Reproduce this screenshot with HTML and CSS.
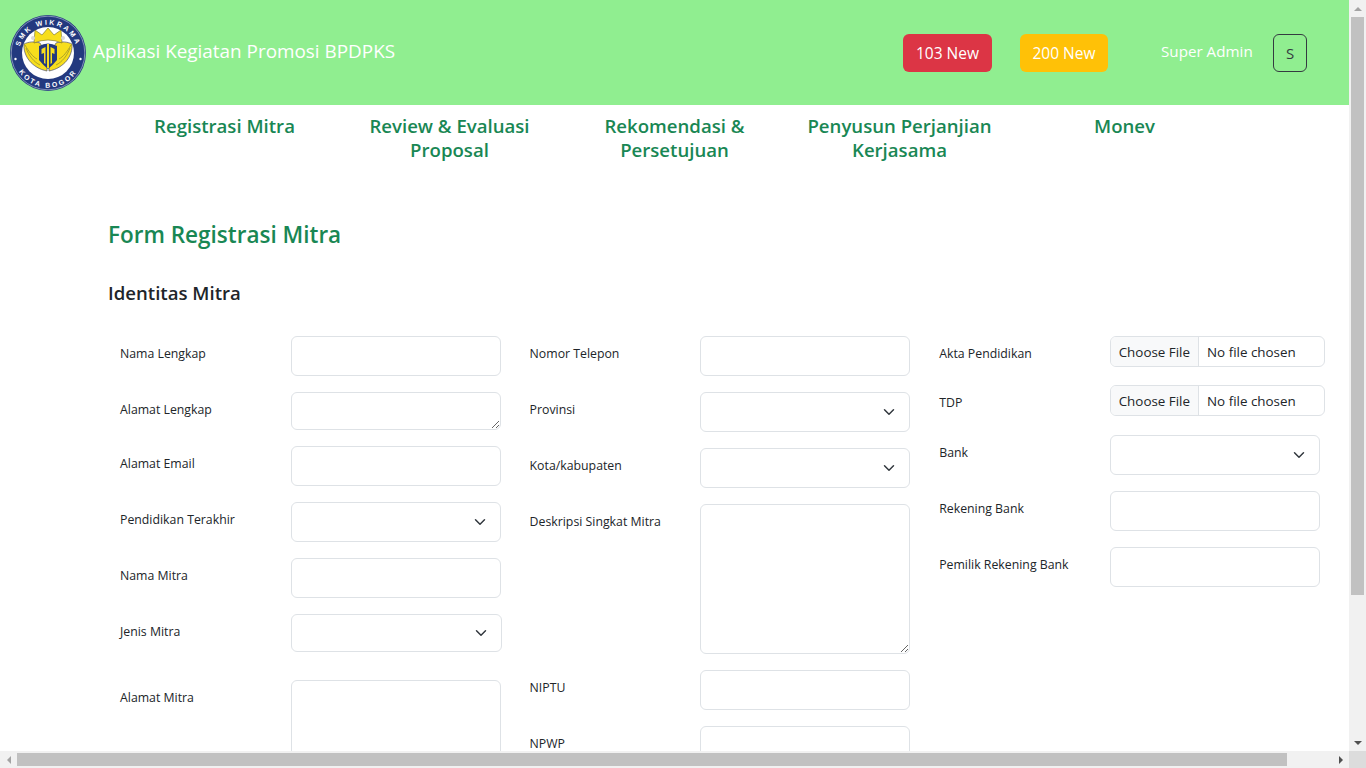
FILE: index.html
```html
<!DOCTYPE html>
<html>
<head>
	<title>Aplikasi Kegiatan Promosi BPDPKS</title>

	<link rel="stylesheet" href="styles.css">

</head>
<body>

<div class="window">
	<div class="viewport">

		<header class="topbar">
			<svg class="logo" viewBox="0 0 76 76">
				<defs>
					<path id="arcTop" d="M 9.5 44 A 29 29 0 1 1 66.5 44"/>
					<path id="arcBottom" d="M 3.8 42 A 34.4 34.4 0 0 0 72.2 42"/>
				</defs>
				<circle cx="38" cy="38" r="38" fill="#23397f"/>
				<circle cx="38" cy="38" r="36.8" fill="none" stroke="#dfe4f0" stroke-width="0.5"/>
				<circle cx="38" cy="38" r="26" fill="#fff"/>
				<text class="logo-text"><textPath href="#arcTop" startOffset="50%" text-anchor="middle">SMK WIKRAMA</textPath></text>
				<text class="logo-text"><textPath href="#arcBottom" startOffset="50%" text-anchor="middle">KOTA BOGOR</textPath></text>
				<circle cx="5.5" cy="44" r="1.2" fill="#fff"/>
				<circle cx="70.5" cy="44" r="1.2" fill="#fff"/>
				<path d="M30 28 C24 26 18 27 14 29 C13 41 22 53 37 56 L37 40 Z" fill="#f7de1c" stroke="#4d5170" stroke-width="0.7"/>
				<path d="M46 28 C52 26 58 27 62 29 C63 41 54 53 39 56 L39 40 Z" fill="#f7de1c" stroke="#4d5170" stroke-width="0.7"/>
				<path d="M16 33 C19 41 24 47 30 50 M15 30 C19 37 23 42 27 44 M49 44 C53 42 57 37 61 30 M46 50 C52 47 57 41 60 33" fill="none" stroke="#8d8a30" stroke-width="0.7"/>
				<path d="M24 28 L25 15 L32 20 L38 13 L44 20 L51 15 L52 28 Q38 22 24 28 Z" fill="#f7de1c" stroke="#6f6c2c" stroke-width="0.6"/>
				<circle cx="23" cy="23" r="2" fill="#d8d8d8"/>
				<circle cx="53" cy="23" r="2" fill="#d8d8d8"/>
				<path d="M29 31 Q38 26 47 31 L47 45 Q43 50 38 54 Q33 50 29 45 Z" fill="#23397f"/>
				<path d="M31.5 34 L35.5 32 L35.5 49 L34 48 L34 38 L31.5 39 Z M44.5 34 L40.5 32 L40.5 49 L42 48 L42 38 L44.5 39 Z" fill="#f7de1c"/>
				<path d="M37 29 L39 29 L39 53 L37 53 Z" fill="#f7de1c"/>
			</svg>
			<span class="brand">Aplikasi Kegiatan Promosi BPDPKS</span>
			<div class="topbar-right">
				<button class="badge badge-red">103 New</button>
				<button class="badge badge-yellow">200 New</button>
				<span class="username">Super Admin</span>
				<button class="avatar">S</button>
			</div>
		</header>

		<nav class="menu">
			<a class="menu-item">Registrasi Mitra</a>
			<a class="menu-item">Review &amp; Evaluasi Proposal</a>
			<a class="menu-item">Rekomendasi &amp; Persetujuan</a>
			<a class="menu-item">Penyusun Perjanjian Kerjasama</a>
			<a class="menu-item">Monev</a>
		</nav>

		<main class="content">
			<h2 class="title">Form Registrasi Mitra</h2>
			<h3 class="subtitle">Identitas Mitra</h3>

			<form class="columns">
				<div class="col">
					<div class="row"><label>Nama Lengkap</label><input type="text"></div>
					<div class="row"><label>Alamat Lengkap</label><textarea class="short"></textarea></div>
					<div class="row row-tight"><label>Alamat Email</label><input type="text"></div>
					<div class="row"><label>Pendidikan Terakhir</label><select></select></div>
					<div class="row"><label>Nama Mitra</label><input type="text"></div>
					<div class="row row-gap"><label>Jenis Mitra</label><select class="select-small"></select></div>
					<div class="row"><label>Alamat Mitra</label><textarea class="tall"></textarea></div>
				</div>
				<div class="col">
					<div class="row"><label>Nomor Telepon</label><input type="text"></div>
					<div class="row"><label>Provinsi</label><select></select></div>
					<div class="row"><label>Kota/kabupaten</label><select></select></div>
					<div class="row"><label>Deskripsi Singkat Mitra</label><textarea class="tall"></textarea></div>
					<div class="row"><label>NIPTU</label><input type="text"></div>
					<div class="row"><label>NPWP</label><input type="text"></div>
				</div>
				<div class="col">
					<div class="row row-file"><label>Akta Pendidikan</label><input type="file"></div>
					<div class="row row-file"><label>TDP</label><input type="file"></div>
					<div class="row"><label>Bank</label><select></select></div>
					<div class="row"><label>Rekening Bank</label><input type="text"></div>
					<div class="row"><label>Pemilik Rekening Bank</label><input type="text"></div>
				</div>
			</form>
		</main>

	</div>

	<div class="scroll-v">
		<span class="arrow arrow-up"></span>
		<span class="thumb-v"></span>
		<span class="arrow arrow-down"></span>
	</div>
	<div class="scroll-h">
		<span class="arrow arrow-left"></span>
		<span class="thumb-h"></span>
		<span class="arrow arrow-right"></span>
	</div>
	<div class="scroll-corner"></div>
</div>

</body>
</html>
```

FILE: styles.css
```css
* {
	box-sizing: border-box;
}

html, body {
	margin: 0;
	height: 100%;
	overflow: hidden;
}

body {
	background: #fff;
	color: #212529;
	font-family: "Open Sans", "Noto Sans", sans-serif;
	font-size: 16px;
}

.window {
	display: grid;
	grid-template-columns: 1349px 17px;
	grid-template-rows: 751px 17px;
	height: 768px;
}

.viewport {
	overflow: hidden;
}

/* header */
.topbar {
	display: flex;
	align-items: center;
	height: 105px;
	padding: 1px 42px 0 10px;
	background: #90ee90;
}

.logo {
	width: 76px;
	height: 76px;
	flex: none;
}

.logo-text {
	fill: #fff;
	font-family: "Liberation Sans", sans-serif;
	font-size: 7px;
	font-weight: 700;
	letter-spacing: 2.2px;
}

.brand {
	margin: -4px 0 0 7px;
	color: #fff;
	font-size: 18.9px;
}

.topbar-right {
	display: flex;
	align-items: center;
	margin-left: auto;
}

.badge {
	height: 38px;
	padding: 0 0 1px;
	border: 0;
	border-radius: 6px;
	color: #fff;
	font: inherit;
	font-size: 15.5px;
}

.badge-red {
	width: 89px;
	background: #dc3545;
}

.badge-yellow {
	width: 88px;
	margin-left: 28px;
	background: #ffc107;
}

.username {
	width: 91px;
	margin: -4px 21px 0 53px;
	color: #fff;
	font-size: 15.2px;
	white-space: nowrap;
}

.avatar {
	width: 34px;
	height: 38px;
	padding: 0;
	border: 1px solid #343a40;
	border-radius: 6px;
	background: transparent;
	color: #343a40;
	font: inherit;
	font-size: 15px;
}

/* menu */
.menu {
	display: flex;
	justify-content: center;
	padding-top: 9px;
}

.menu-item {
	width: 225px;
	padding: 0 16px;
	color: #198754;
	font-size: 18.6px;
	font-weight: 600;
	line-height: 24px;
	text-align: center;
}

/* form */
.content {
	padding: 0 0 0 108px;
}

.title {
	margin: 58px 0 0;
	color: #198754;
	font-size: 22.5px;
	font-weight: 600;
	line-height: 29px;
}

.subtitle {
	margin: 32px 0 0;
	color: #212529;
	font-size: 18.6px;
	font-weight: 600;
	line-height: 24px;
}

.columns {
	display: flex;
	margin-top: 31px;
}

.col {
	width: 409.6px;
	flex: none;
	padding-left: 12px;
}

.row {
	display: flex;
	align-items: flex-start;
	margin-bottom: 16px;
}

.row-gap {
	margin-bottom: 28px;
}

.row-file {
	margin-bottom: 18px;
}

.row-file + .row-file {
	margin-bottom: 19px;
}

label {
	width: 170.5px;
	flex: none;
	padding-top: 9px;
	font-size: 12.3px;
	line-height: 17px;
}

input, select, textarea {
	display: block;
	width: 210px;
	height: 40px;
	margin: 0;
	padding: 6px 12px;
	border: 1px solid #dee2e6;
	border-radius: 6px;
	background: #fff;
	color: #212529;
	font: inherit;
	font-size: 13.4px;
}

select {
	appearance: none;
	padding-right: 36px;
	background-image: url("data:image/svg+xml,%3csvg xmlns='http://www.w3.org/2000/svg' viewBox='0 0 16 16'%3e%3cpath fill='none' stroke='%23343a40' stroke-linecap='round' stroke-linejoin='round' stroke-width='2' d='m2 5 6 6 6-6'/%3e%3c/svg%3e");
	background-repeat: no-repeat;
	background-position: right 12px center;
	background-size: 16px 12px;
}

.select-small {
	width: 211px;
	height: 38px;
}

.short {
	height: 38px;
}

.tall {
	height: 150px;
}

input[type="file"] {
	width: 215px;
	height: 31px;
	padding: 0;
	overflow: hidden;
	line-height: 30px;
}

input[type="file"]::file-selector-button {
	height: 29px;
	margin: 0 8px 0 0;
	padding: 0 8px;
	border: 0;
	border-right: 1px solid #dee2e6;
	background: #f8f9fa;
	color: #212529;
	font: inherit;
}

/* scrollbars, the window keeps them always visible */
.scroll-v {
	display: flex;
	flex-direction: column;
	align-items: center;
	justify-content: space-between;
	background: #f1f1f1;
}

.scroll-h {
	display: flex;
	align-items: center;
	background: #f1f1f1;
}

.scroll-corner {
	background: #dcdcdc;
}

.thumb-v {
	width: 13px;
	height: 578px;
	margin-bottom: auto;
	background: #c1c1c1;
}

.thumb-h {
	width: 1270px;
	height: 13px;
	margin-right: auto;
	background: #c1c1c1;
}

.arrow {
	display: flex;
	flex: none;
	width: 17px;
	height: 17px;
}

.arrow::after {
	content: "";
	margin: auto;
	border: 4px solid transparent;
}

.arrow-up::after {
	border-top: 0;
	border-bottom-color: #a3a3a3;
}

.arrow-down::after {
	border-bottom: 0;
	border-top-color: #505050;
}

.arrow-left::after {
	border-left: 0;
	border-right-color: #a3a3a3;
}

.arrow-right::after {
	border-right: 0;
	border-left-color: #505050;
}
```
